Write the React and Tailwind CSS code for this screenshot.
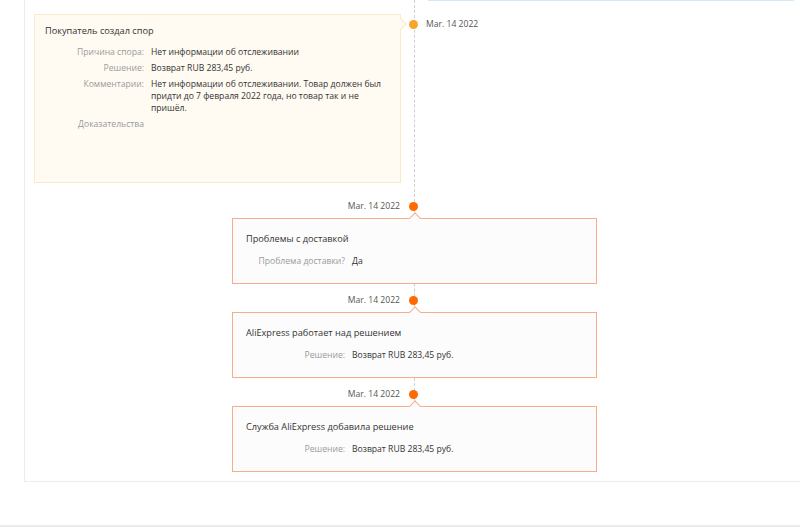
import React from "react";

const events = [
  {
    title: "Проблемы с доставкой",
    rows: [["Проблема доставки?", "Да"]],
  },
  {
    title: "AliExpress работает над решением",
    rows: [["Решение:", "Возврат RUB 283,45 руб."]],
  },
  {
    title: "Служба AliExpress добавила решение",
    rows: [["Решение:", "Возврат RUB 283,45 руб."]],
  },
];

function Row({ label, value }) {
  return (
    <div className="flex gap-[7px] leading-[12px]">
      <div className="w-[99px] shrink-0 text-right text-[#9a9a9a]">{label}</div>
      <div className="flex-1 text-[#333]">{value}</div>
    </div>
  );
}

function Dot({ light }) {
  return (
    <div
      className={
        "relative z-10 h-[9px] w-[9px] shrink-0 rounded-full " +
        (light ? "bg-[#f9a52a]" : "bg-[#ff6a00]")
      }
    />
  );
}

export default function App() {
  return (
    <div className="relative h-[527px] w-[800px] overflow-hidden bg-white font-['Open_Sans',sans-serif] text-[8.6px]">
      <div className="relative ml-[24px] h-[482px] border-b border-l border-[#ececec]">
        {/* timeline */}
        <div className="absolute left-[389px] top-0 h-[406px] border-l border-dashed border-[#cfcfcf]" />

        <div className="ml-[403px] h-px w-[366px] bg-[#d3eafb]" />

        {/* первый спор */}
        <div className="mt-[13px] flex items-start">
          <div className="relative ml-[9px] h-[169px] w-[367px] border border-[#fde8c7] bg-[#fffaf2] pl-[10px] pr-[12px] pt-[9px]">
            <div className="mb-[8px] text-[9.2px] leading-[14px] text-[#333]">Покупатель создал спор</div>
            <div className="flex flex-col gap-[4px]">
              <Row label="Причина спора:" value="Нет информации об отслеживании" />
              <Row label="Решение:" value="Возврат RUB 283,45 руб." />
              <Row
                label="Комментарии:"
                value="Нет информации об отслеживании. Товар должен был придти до 7 февраля 2022 года, но товар так и не пришёл."
              />
              <Row label="Доказательства" value="" />
            </div>
            <div className="absolute right-[-5px] top-[5px] h-[8px] w-[8px] rotate-45 border-r border-t border-[#fde8c7] bg-[#fffaf2]" />
          </div>
          <div className="ml-[8px] mt-[4px] flex items-center">
            <Dot light />
            <div className="ml-[8px] text-[#555]">Mar. 14 2022</div>
          </div>
        </div>

        {events.map((ev, i) => (
          <div key={i} className={i === 0 ? "mt-[17px]" : "mt-[10px]"}>
            <div className="flex h-[12px] items-center">
              <div className="w-[376px] pr-[1px] text-right leading-[12px] text-[#555]">Mar. 14 2022</div>
              <div className="ml-[8px]">
                <Dot />
              </div>
            </div>
            <div className="relative ml-[207px] mt-[6px] h-[66px] w-[365px] border border-[#f7ad8b] bg-[#fcfcfc] pl-[13px] pt-[13px]">
              <div className="absolute left-[178px] top-[-5px] h-[8px] w-[8px] rotate-45 border-l border-t border-[#f7ad8b] bg-[#fcfcfc]" />
              <div className="mb-[9px] text-[9.2px] leading-[14px] text-[#333]">{ev.title}</div>
              {ev.rows.map(([l, v]) => (
                <Row key={l} label={l} value={v} />
              ))}
            </div>
          </div>
        ))}
      </div>
      <div className="absolute bottom-0 left-0 h-[2px] w-full bg-[#ececec]" />
    </div>
  );
}
